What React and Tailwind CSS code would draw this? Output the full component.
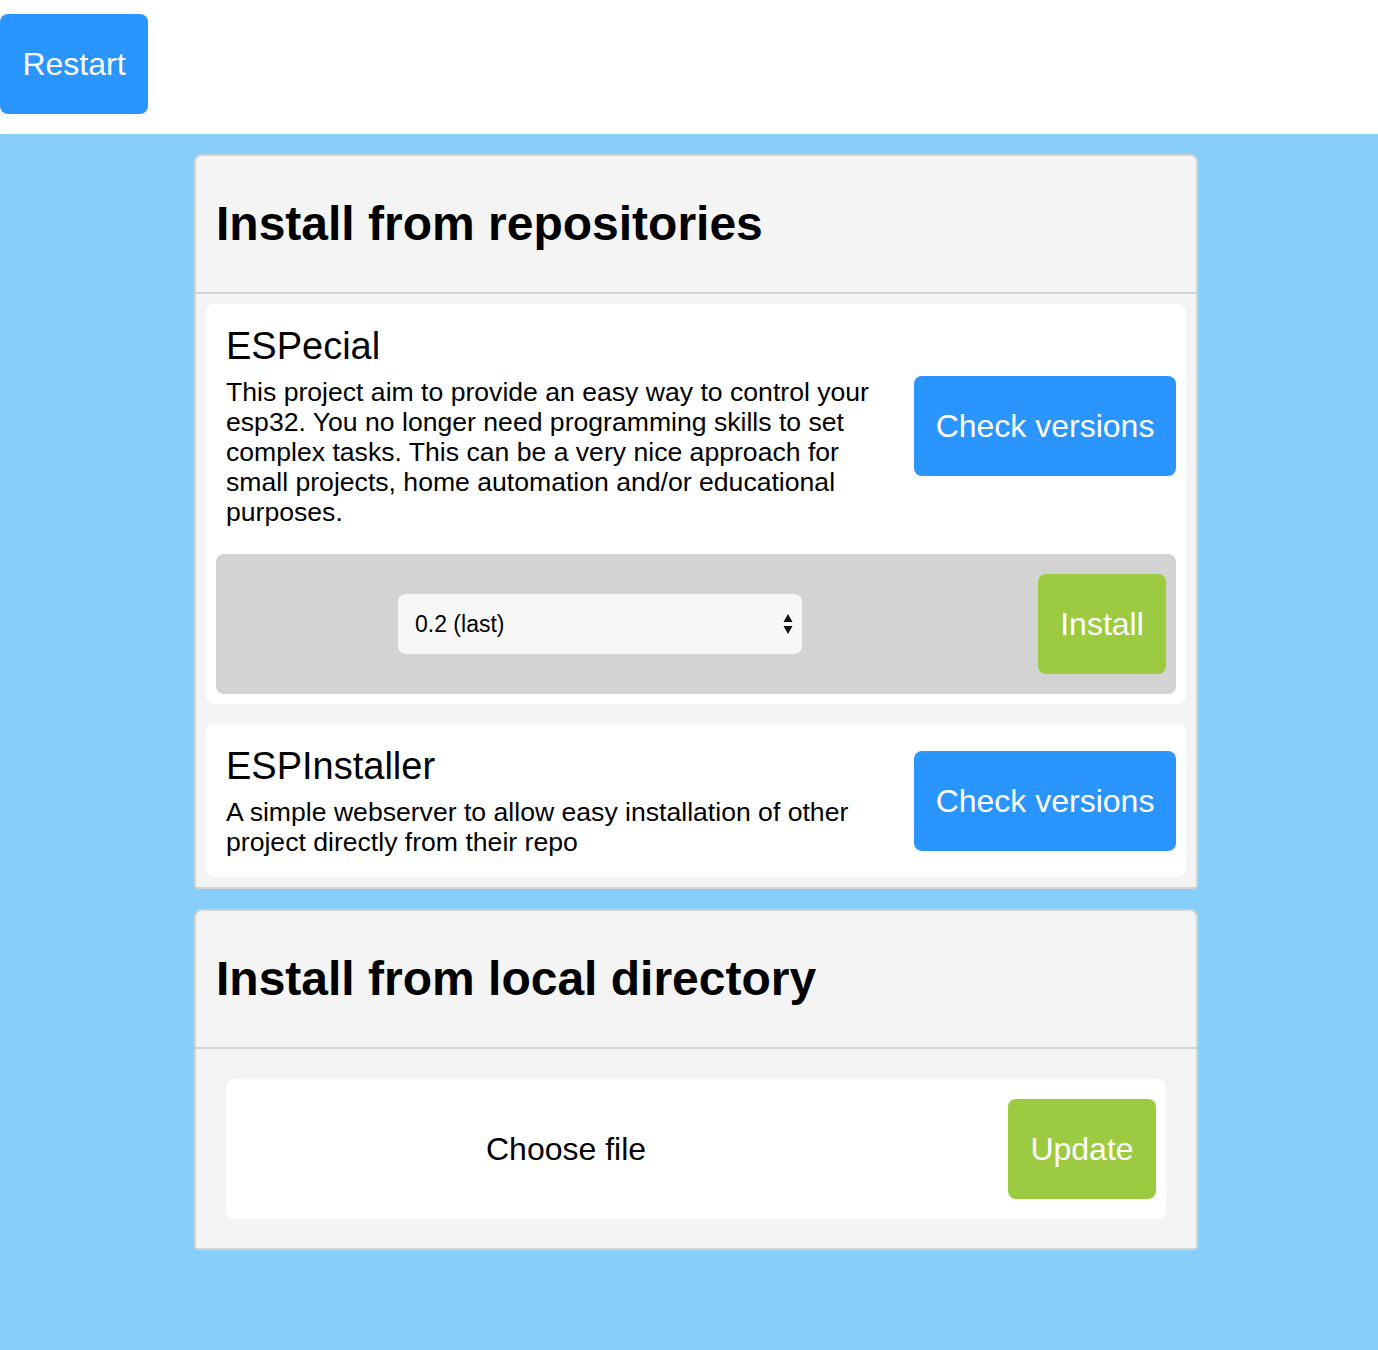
import React from "react";

const font = { fontFamily: '"Liberation Sans", Arial, Helvetica, sans-serif' };

function CheckButton() {
  return (
    <button className="w-[262px] h-[100px] shrink-0 rounded-[8px] bg-[#2a94ff] text-white text-[32px] leading-none">
      Check versions
    </button>
  );
}

function Item({ title, children, extra }) {
  return (
    <div className="bg-white rounded-[8px] p-[10px]">
      <div className="flex items-center">
        <div className="flex-1 px-[10px] py-[10px]">
          <div className="text-[38px] leading-[44px] text-black mb-[9px]">{title}</div>
          <div className="text-[26.6px] leading-[30px] text-black pr-[30px]">{children}</div>
        </div>
        <CheckButton />
      </div>
      {extra}
    </div>
  );
}

function Card({ title, children, bodyClass }) {
  return (
    <div className="ml-[194px] w-[1004px] bg-[#f4f4f4] border-2 border-[#d3d3d3] rounded-t-[8px] rounded-b-[4px]">
      <div className="h-[138px] flex items-center px-[20px] border-b-2 border-[#d3d3d3]">
        <h1 className="text-[48px] font-bold text-black leading-[56px]">{title}</h1>
      </div>
      <div className={bodyClass}>{children}</div>
    </div>
  );
}

export default function App() {
  return (
    <div style={font} className="min-h-[1350px] bg-[#87cefa]">
      <div className="bg-white pt-[14px] pb-[20px]">
        <button className="w-[148px] h-[100px] rounded-[8px] bg-[#2a94ff] text-white text-[32px] leading-none">
          Restart
        </button>
      </div>
      <div className="pt-[20px] pb-[99px] flex flex-col gap-[20px]">
        <Card title="Install from repositories" bodyClass="p-[10px] flex flex-col gap-[20px]">
          <Item
            title="ESPecial"
            extra={
              <div className="mt-[17px] h-[140px] bg-[#d3d3d3] rounded-[8px] flex items-center">
                <div className="w-[768px] flex justify-center">
                  <div className="w-[404px] h-[60px] bg-[#f7f7f7] rounded-[8px] flex items-center justify-between pl-[17px] pr-[9px]">
                    <span className="text-[23px] text-black">0.2 (last)</span>
                    <svg width="10" height="22" viewBox="0 0 10 22">
                      <polygon points="5,1 9.5,9 0.5,9" fill="#111" />
                      <polygon points="0.5,13 9.5,13 5,21" fill="#111" />
                    </svg>
                  </div>
                </div>
                <div className="flex-1 flex justify-end pr-[10px]">
                  <button className="w-[128px] h-[100px] rounded-[8px] bg-[#9ccb41] text-white text-[32px] leading-none">
                    Install
                  </button>
                </div>
              </div>
            }
          >
            This project aim to provide an easy way to control your esp32. You no longer need programming skills to set complex tasks. This can be a very nice approach for small projects, home automation and/or educational purposes.
          </Item>
          <Item title="ESPInstaller">
            A simple webserver to allow easy installation of other project directly from their repo
          </Item>
        </Card>
        <Card title="Install from local directory" bodyClass="px-[30px] pt-[30px] pb-[29px]">
          <div className="bg-white rounded-[8px] h-[140px] flex items-center">
            <div className="flex-1 pl-[260px]">
              <span className="text-[32px] text-black">Choose file</span>
            </div>
            <div className="pr-[10px]">
              <button className="w-[148px] h-[100px] rounded-[8px] bg-[#9ccb41] text-white text-[32px] leading-none">
                Update
              </button>
            </div>
          </div>
        </Card>
      </div>
    </div>
  );
}
